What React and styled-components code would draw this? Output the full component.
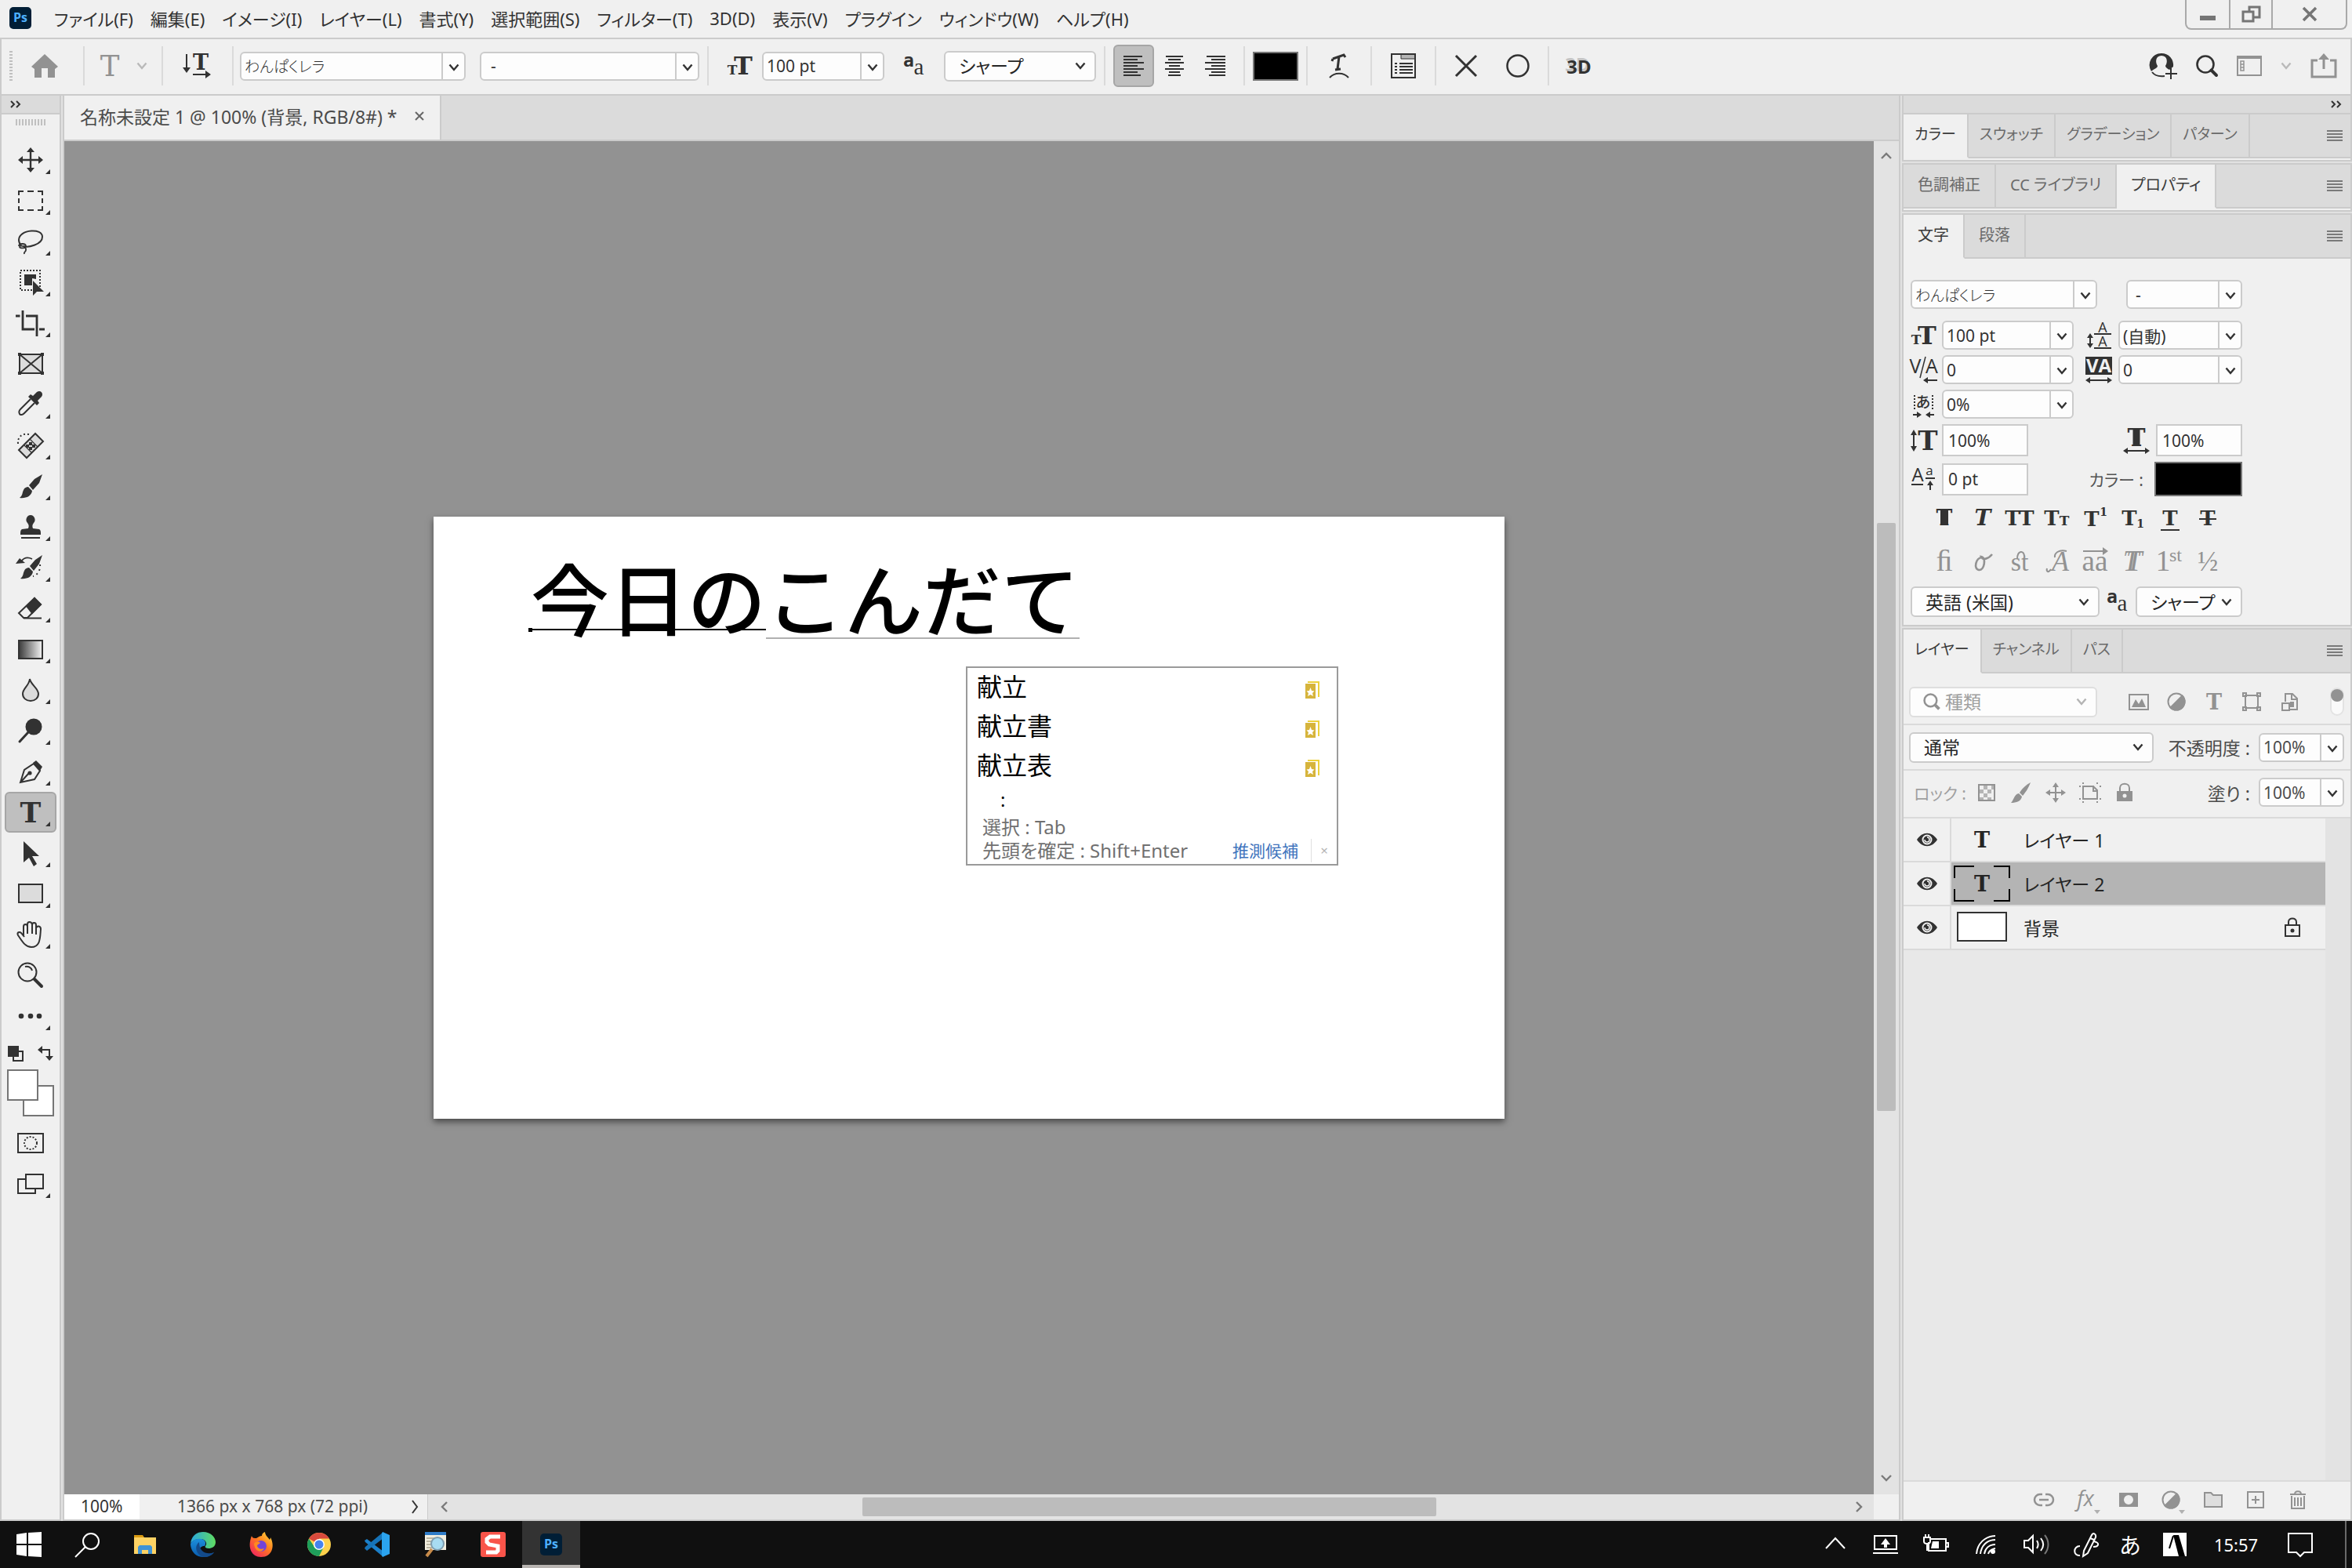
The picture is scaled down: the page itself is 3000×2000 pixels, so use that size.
import React, { useState } from 'react';
import styled, { createGlobalStyle, css } from 'styled-components';

const INK = '#323232';
const MUTED = '#929292';
const LINE = '#cbcbcb';
const SERIF = '"DejaVu Serif", serif';

const GlobalStyle = createGlobalStyle`
  *, *::before, *::after { box-sizing: border-box; }
  body {
    margin: 0;
    background: #e1e1e1;
    color: #323232;
    font-family: "Noto Sans", "Noto Sans CJK JP", sans-serif;
    font-size: 23px;
    font-feature-settings: "palt";
  }
  button, input, select {
    font: inherit;
    font-feature-settings: inherit;
    color: inherit;
    margin: 0;
    padding: 0;
    border: 0;
    background: none;
    outline: none;
  }
  svg { display: block; flex: none; overflow: visible; }
`;

/* ---------- icons ---------- */

const Icon = ({ w = 40, h = w, color = INK, sw = 2, children }) => (
  <svg
    width={w}
    height={h}
    viewBox={`0 0 ${w} ${h}`}
    fill="none"
    stroke={color}
    strokeWidth={sw}
    color={color}
    aria-hidden="true"
  >
    {children}
  </svg>
);

const Letter = ({ x, y, size, weight = 700, family = SERIF, italic, children, fill = 'currentColor' }) => (
  <text
    x={x}
    y={y}
    fontSize={size}
    fontWeight={weight}
    fontFamily={family}
    fontStyle={italic ? 'italic' : 'normal'}
    textAnchor="middle"
    fill={fill}
    stroke="none"
  >
    {children}
  </text>
);

const Chevron = ({ color = INK }) => (
  <Icon w={14} h={10} color={color} sw={2.4}>
    <path d="M1.5 1.5 7 8 12.5 1.5" />
  </Icon>
);

const Menu4 = () => (
  <Icon w={20} h={14} color="#7a7a7a">
    <path d="M0 1H20M0 5H20M0 9H20M0 13H20" />
  </Icon>
);

const DoubleChevron = () => (
  <Icon w={14} h={10}>
    <path d="M1 1 5 5 1 9M8 1 12 5 8 9" />
  </Icon>
);

const Search = ({ color = INK, size = 28 }) => (
  <svg width={size} height={size} viewBox="0 0 28 28" fill="none" stroke={color} strokeWidth="2.6" aria-hidden="true">
    <circle cx="12" cy="12" r="10.5" />
    <path d="M19.5 19.5 26 26" strokeWidth="4" strokeLinecap="round" />
  </svg>
);

const tools = [
  {
    name: '移動ツール',
    art: (
      <>
        <path d="M20 6V34M6 20H34" strokeWidth="2.4" />
        <path d="M20 4l5 6H15zM20 36l5-6H15zM4 20l6-5v10zM36 20l-6-5v10z" fill="currentColor" stroke="none" />
      </>
    )
  },
  {
    name: '長方形選択ツール',
    art: <path d="M5 13V8H11M16 8H24M29 8H35V13M35 17V23M35 27V32H29M24 32H16M11 32H5V27M5 23V17" />
  },
  {
    name: 'なげなわツール',
    art: (
      <>
        <path d="M11 26C17 28 35 24 35 14 35 8 28 6 21 6.5 12 7 5 12 5 18c0 3 1 5 3 7" />
        <path d="M5 26c0-4 9-4 9 0 0 3-8 3-8 1 0-3 9-1 8 4-.5 3-3 2-2 5" strokeWidth="1.8" />
      </>
    )
  },
  {
    name: 'オブジェクト選択ツール',
    art: (
      <>
        <rect x="7" y="5" width="25" height="25" strokeDasharray="2 2" />
        <path d="M12 10H27V16L22 15V24H12z" fill="currentColor" stroke="none" />
        <path d="M23 18V37L28 32H37z" fill="currentColor" stroke="none" />
      </>
    )
  },
  {
    name: '切り抜きツール',
    art: <path d="M1 11H6.5M10 4V28H25M31 28H38M14 11H28V37" strokeWidth="2.8" />
  },
  {
    name: 'フレームツール',
    plain: true,
    art: (
      <>
        <rect x="6" y="8" width="29" height="24" fill="#dcdcdc" />
        <path d="M6 8 35 32M35 8 6 32" />
        <path d="M4 6h4v4H4zM33 6h4v4h-4zM4 30h4v4H4zM33 30h4v4h-4z" fill="currentColor" stroke="none" />
      </>
    )
  },
  {
    name: 'スポイトツール',
    art: (
      <>
        <path d="M20 13 7 26c-2 2-2 4-1 6s4 1 6-1L25 18" />
        <path d="M17 10l3-3 3 2 5-5c5-3 9 2 6 6l-5 5 2 3-3 3z" fill="currentColor" stroke="none" />
      </>
    )
  },
  {
    name: 'スポット修復ブラシツール',
    art: (
      <>
        <path d="M4 18C3 9 10 4 18 6" strokeDasharray="2 3" />
        <path d="M5 26 26 5 36 15 15 36z" fill="#dcdcdc" />
        <path d="M12 20 21 29M19 12 29 22" strokeWidth="1.2" />
        <path d="M19 17h2v2h-2zM19 23h2v2h-2zM15 20h2v2h-2zM23 20h2v2h-2z" fill="currentColor" />
      </>
    )
  },
  {
    name: 'ブラシツール',
    art: (
      <path d="M35 5 31 16 23 25 18 19 25 11zM17 21l5 5c-1 7-8 10-16 9 4-3 3-6 5-10 1-3 4-4 6-4z" fill="currentColor" stroke="none" />
    )
  },
  {
    name: 'コピースタンプツール',
    art: (
      <>
        <path d="M20 5a6 6 0 0 1 4 10c-2 2-2 5-1 7l8 1c2 1 2 3 2 7H7c0-4 0-6 2-7l8-1c1-2 1-5-1-7A6 6 0 0 1 20 5z" fill="currentColor" stroke="none" />
        <path d="M8 34H32" />
      </>
    )
  },
  {
    name: 'ヒストリーブラシツール',
    art: (
      <>
        <path d="M35 4 31 15 24 24 19 18 26 10zM18 20l5 5c-1 7-8 10-16 9 4-3 3-6 5-10 1-3 4-4 6-4z" fill="currentColor" stroke="none" />
        <path d="M22 9C16 6 11 8 8 12" strokeWidth="1.6" />
        <path d="M1 15 6 8l7 6z" fill="currentColor" stroke="none" />
        <path d="M32 16C33 24 28 30 23 31" strokeDasharray="2 4" />
      </>
    )
  },
  {
    name: '消しゴムツール',
    art: (
      <>
        <path d="M5 26 25 7 33 15 16 32H11z" />
        <path d="M15 17 25 7 33 15 22 26z" fill="currentColor" />
        <path d="M11 32.5H34" />
      </>
    )
  },
  {
    name: 'グラデーションツール',
    art: (
      <>
        <defs>
          <linearGradient id="toolFade">
            <stop offset="0" stopColor="#3a3a3a" />
            <stop offset="1" stopColor="#f4f4f4" />
          </linearGradient>
        </defs>
        <rect x="5" y="9" width="30" height="23" fill="url(#toolFade)" />
      </>
    )
  },
  {
    name: 'ぼかしツール',
    art: <path d="M19 6c1 7 11 12 11 19 0 5-4 9-10 9s-10-4-10-9c0-7 8-10 9-19z" fill="#dcdcdc" />
  },
  {
    name: '覆い焼きツール',
    art: (
      <>
        <circle cx="24" cy="15" r="10.5" fill="currentColor" stroke="none" />
        <path d="M17 22 6 34" strokeWidth="3" strokeLinecap="round" />
      </>
    )
  },
  {
    name: 'ペンツール',
    art: (
      <>
        <path d="M7 34 12 18 24 10 32 19 25 30zM7 34 18 22" />
        <circle cx="19" cy="22" r="2.6" fill="currentColor" stroke="none" />
        <path d="M23 9 27 6 35 14 32 19z" fill="currentColor" stroke="none" />
      </>
    )
  },
  { name: '横書き文字ツール', active: true, art: <Letter x={20} y={33} size={36} weight={700}>T</Letter> },
  {
    name: 'パスコンポーネント選択ツール',
    art: <path d="M11 5V32L18 26 24 37 28 34 22 24H31z" fill="currentColor" stroke="none" />
  },
  { name: '長方形ツール', art: <rect x="5" y="8" width="30" height="23" fill="#dcdcdc" /> },
  {
    name: '手のひらツール',
    art: (
      <path d="M11 22V10c0-4 5-4 5 0v9V7c0-4 5-4 6 0v12V8c0-4 5-4 5 0v12-8c1-4 6-3 6 1-1 10 0 23-12 23C13 36 9 28 4 21c-2-4 2-5 4-3l4 5" />
    )
  },
  {
    name: 'ズームツール',
    plain: true,
    art: (
      <>
        <circle cx="16" cy="16" r="11.5" />
        <path d="M13 9c4-1 8 1 9 5" />
        <path d="M25 25 34 34" strokeWidth="4" strokeLinecap="round" />
      </>
    )
  },
  {
    name: 'ツールバーを編集',
    art: (
      <g fill="currentColor" stroke="none">
        <circle cx="8" cy="20" r="3.3" />
        <circle cx="20" cy="20" r="3.3" />
        <circle cx="31" cy="20" r="3.3" />
      </g>
    )
  }
];

/* ---------- shared controls ---------- */

const IconButton = styled.button`
  flex: none;
  width: ${p => p.$w || 48}px;
  height: ${p => p.$h || 52}px;
  display: flex;
  align-items: center;
  justify-content: center;
  border: 2px solid transparent;
  border-radius: 6px;
  ${p =>
    p.$active &&
    css`
      background: #bfbfbf;
      border-color: #a6a6a6;
    `}
`;

const ComboBox = styled.div`
  display: flex;
  flex: none;
  width: ${p => p.$w}px;
  height: 37px;
  background: #fdfdfd;
  border: 2px solid ${LINE};
  border-radius: 6px;
  font-size: 21px;
  input {
    flex: 1;
    min-width: 0;
    padding-left: ${p => p.$pad || 4}px;
  }
  button {
    width: 29px;
    border-left: 2px solid ${LINE};
    display: flex;
    align-items: center;
    justify-content: center;
    padding-top: 3px;
  }
`;

const FontInput = styled.input`
  font-size: 19px;
  font-weight: 300;
`;

const Combo = ({ w, pad, label, value, thin }) => {
  const Field = thin ? FontInput : 'input';
  return (
    <ComboBox $w={w} $pad={pad}>
      <Field aria-label={label} defaultValue={value} />
      <button type="button" aria-label={`${label} 一覧`}>
        <Chevron />
      </button>
    </ComboBox>
  );
};

const SelectBox = styled.div`
  flex: none;
  display: grid;
  align-items: center;
  width: ${p => p.$w}px;
  height: 39px;
  background: #fdfdfd;
  border: 2px solid ${p => (p.$dim ? '#dedede' : LINE)};
  border-radius: 6px;
  color: ${p => (p.$dim ? '#a0a0a0' : '#252525')};
  select, svg { grid-area: 1 / 1; }
  select {
    appearance: none;
    width: 100%;
    height: 35px;
    padding-left: ${p => (p.$dim ? 44 : 17)}px;
  }
  svg {
    justify-self: end;
    margin-right: 11px;
    pointer-events: none;
  }
  svg.lead {
    justify-self: start;
    margin-left: 16px;
  }
`;

const Select = ({ w, label, value, dim }) => (
  <SelectBox $w={w} $dim={dim}>
    <select aria-label={label} defaultValue={value}>
      <option>{value}</option>
    </select>
    {dim && (
      <svg className="lead" width="22" height="22" viewBox="0 0 28 28" fill="none" stroke="#929292" strokeWidth="3.2">
        <circle cx="12" cy="12" r="10" />
        <path d="M19 19 26 26" strokeWidth="5" />
      </svg>
    )}
    <Chevron color={dim ? '#b4b4b4' : INK} />
  </SelectBox>
);

const Swatch = styled.button`
  flex: none;
  width: ${p => p.$w}px;
  height: ${p => p.$h}px;
  background: ${p => p.$fill || '#000'};
  border: 2px solid #757575;
`;

/* ---------- top bars ---------- */

const Page = styled.div`
  min-height: 100vh;
  display: flex;
  flex-direction: column;
`;

const MenuBar = styled.header`
  display: flex;
  height: 50px;
  background: #f0f0f0;
  border-bottom: 2px solid ${LINE};
`;

const MenuItems = styled.nav`
  flex: 1;
  display: flex;
  align-items: center;
  gap: 22px;
  padding: 0 0 2px 12px;
  font-size: 22px;
  white-space: nowrap;
`;

const PsBadge = styled.span`
  width: 28px;
  height: 28px;
  border-radius: 5px;
  background: #001e36;
  color: #4db0ff;
  font: 700 16px/27px "Open Sans", sans-serif;
  text-align: center;
  margin-right: 7px;
`;

const WindowButtons = styled.div`
  display: flex;
  height: 38px;
  margin-right: 6px;
  border: 2px solid #a9a9a9;
  border-top: 0;
  border-radius: 0 0 8px 8px;
  button {
    width: 54px;
    display: flex;
    align-items: center;
    justify-content: center;
  }
  button + button { border-left: 2px solid #a9a9a9; }
  button:last-child { width: 95px; }
`;

const OptionsBar = styled.div`
  display: flex;
  align-items: center;
  height: 72px;
  padding: 0 17px 2px 10px;
  background: #f0f0f0;
  border: solid ${LINE};
  border-width: 0 2px 2px;
`;

const Sep = styled.span`
  flex: none;
  width: 2px;
  height: 50px;
  margin: 0 ${p => p.$m || 10}px;
  background: #dadada;
`;

const Grip = styled.span`
  width: 4px;
  height: 39px;
  background: repeating-linear-gradient(#c0c0c0 0 2px, transparent 2px 4px);
`;

const Group = styled.div`
  display: flex;
  align-items: center;
  gap: ${p => p.$gap || 0}px;
`;

const Push = styled.div`
  margin-left: auto;
  display: flex;
  align-items: center;
  gap: 24px;
  button { width: auto; border: 0; }
`;

const ThreeD = styled.button`
  width: 56px;
  font: 700 24px "Open Sans", sans-serif;
  text-shadow: -2px -3px 0 #c4c4c4;
`;

const menuItems = [
  'ファイル(F)', '編集(E)', 'イメージ(I)', 'レイヤー(L)', '書式(Y)', '選択範囲(S)',
  'フィルター(T)', '3D(D)', '表示(V)', 'プラグイン', 'ウィンドウ(W)', 'ヘルプ(H)'
];

const alignments = [
  { name: '左揃え', d: 'M0 1H24M0 5H18M0 9H26M0 13H18M0 17H26M0 21H18M0 25H22' },
  { name: '中央揃え', d: 'M2 1H24M5 5H21M1 9H25M6 13H20M1 17H25M6 21H20M5 25H21' },
  { name: '右揃え', d: 'M2 1H26M8 5H26M0 9H26M8 13H26M0 17H26M8 21H26M5 25H26' }
];

const SizeIcon = () => (
  <Icon w={32} h={30}>
    <Letter x={21} y={26} size={32}>T</Letter>
    <Letter x={7} y={26} size={17}>T</Letter>
  </Icon>
);

const AntiAlias = () => (
  <Icon w={28} h={30}>
    <Letter x={7} y={16} size={23} family='"DejaVu Sans Mono", monospace'>a</Letter>
    <Letter x={20} y={26} size={29} weight={400} family='"Liberation Serif", serif'>a</Letter>
  </Icon>
);

const Options = () => {
  const [align, setAlign] = useState(0);
  return (
    <OptionsBar>
      <Grip />
      <IconButton $w={82} aria-label="ホーム">
        <Icon w={34} h={30} color={MUTED}>
          <path d="M17 0 34 16 30 19V30H21V18H13V30H4V19L0 16z" fill="currentColor" stroke="none" />
        </Icon>
      </IconButton>
      <Sep $m={8} />
      <IconButton $w={82} aria-label="文字ツール">
        <Group $gap={20}>
          <Icon w={28} h={30} color={MUTED}>
            <Letter x={14} y={28} size={37} weight={400}>T</Letter>
          </Icon>
          <Chevron color="#b9b9b9" />
        </Group>
      </IconButton>
      <Sep $m={8} />
      <IconButton $w={72} aria-label="テキストの方向">
        <Icon w={36} h={32}>
          <Letter x={22} y={21} size={27}>T</Letter>
          <path d="M4 1V20M12 27H30" />
          <path d="M-1 18H9L4 25zM28 22V32L35 27z" fill="currentColor" stroke="none" />
        </Icon>
      </IconButton>
      <Sep $m={8} />
      <Group $gap={18}>
        <Combo w={288} label="フォント" value="わんぱくレラ" thin />
        <Combo w={280} pad={12} label="スタイル" value="-" />
      </Group>
      <Sep />
      <IconButton $w={58} aria-label="サイズ"><SizeIcon /></IconButton>
      <Combo w={156} label="フォントサイズ" value="100 pt" />
      <IconButton $w={76} aria-label="アンチエイリアス"><AntiAlias /></IconButton>
      <Select w={194} label="アンチエイリアスの種類" value="シャープ" />
      <Sep />
      {alignments.map((a, i) => (
        <IconButton key={a.name} $w={52} $h={54} $active={i === align} aria-label={a.name} onClick={() => setAlign(i)}>
          <Icon w={26} h={26}><path d={a.d} /></Icon>
        </IconButton>
      ))}
      <Sep />
      <Swatch $w={58} $h={37} aria-label="テキストカラー" />
      <Sep />
      <IconButton $w={60} aria-label="ワープテキスト">
        <Icon w={28} h={32}>
          <path d="M6 7 5 10M6 7 20 2 22 5M14 4 12 20M9 21 16 20" strokeWidth="3" />
          <path d="M2 31C8 24 20 24 26 31" />
        </Icon>
      </IconButton>
      <Sep />
      <IconButton $w={60} aria-label="パネルの切り替え">
        <Icon w={32} h={32}>
          <path d="M13 1V7H31V1z" fill="#b5b5b5" strokeWidth="1" />
          <path d="M1 1H31V31H1zM5 13H8M11 13H28M5 17H8M11 17H28M5 21H8M11 21H28M5 25H8M11 25H28" />
        </Icon>
      </IconButton>
      <Sep />
      <Group $gap={10}>
        <IconButton $w={56} aria-label="キャンセル">
          <Icon w={28} h={28} sw={3}><path d="M1 1 27 27M27 1 1 27" /></Icon>
        </IconButton>
        <IconButton $w={56} aria-label="確定">
          <Icon w={30} sw={2.5}><circle cx="15" cy="15" r="13.5" /></Icon>
        </IconButton>
      </Group>
      <Sep />
      <ThreeD>3D</ThreeD>
      <Push>
        <IconButton aria-label="アカウント">
          <Icon w={36} h={34}>
            <path fillRule="evenodd" d="M16 1a15 15 0 0 1 15 17l-5 4c-3-2-5-3-5-5 3-4 3-13-5-13s-8 9-5 13c0 3-5 4-8 7A15 15 0 0 1 16 1z" fill="currentColor" stroke="none" />
            <path d="M4 25C8 30 13 31 20 30M28 20V34M21 27H36" />
          </Icon>
        </IconButton>
        <IconButton aria-label="検索"><Search /></IconButton>
        <IconButton aria-label="ワークスペース">
          <Icon w={32} h={26} color={MUTED}>
            <path d="M1 1H31V25H1zM1 3H31" />
            <path d="M5 7H9V19H5zM5 11H9M5 15H9" strokeWidth="1.5" />
          </Icon>
        </IconButton>
        <Chevron color="#b9b9b9" />
        <IconButton aria-label="共有">
          <Icon w={34} h={32} color={MUTED}>
            <path d="M9 9H2V30H32V9H25M17 20V5" strokeWidth="3" />
            <path d="M17 0 24 8H10z" fill="currentColor" stroke="none" />
          </Icon>
        </IconButton>
      </Push>
    </OptionsBar>
  );
};

/* ---------- left tools ---------- */

const Main = styled.main`
  flex: 1;
  display: flex;
  gap: 2px;
`;

const ToolColumn = styled.aside`
  flex: none;
  width: 78px;
  background: #f0f0f0;
  border: solid ${LINE};
  border-width: 0 2px 2px;
  display: flex;
  flex-direction: column;
  align-items: center;
`;

const CollapseBar = styled.div`
  align-self: stretch;
  display: flex;
  align-items: center;
  justify-content: ${p => (p.$end ? 'flex-end' : 'flex-start')};
  height: 24px;
  padding: 0 11px;
  background: #dbdbdb;
  border-bottom: 2px solid ${LINE};
`;

const ToolGrip = styled.span`
  width: 38px;
  height: 8px;
  margin: 6px 0 18px;
  background: repeating-linear-gradient(90deg, #c0c0c0 0 2px, transparent 2px 4px);
`;

const ToolButton = styled(IconButton)`
  width: 66px;
  position: relative;
  &::after {
    content: '';
    display: ${p => (p.$plain ? 'none' : 'block')};
    position: absolute;
    right: 6px;
    bottom: 6px;
    border: 3px solid transparent;
    border-right-color: ${INK};
    border-bottom-color: ${INK};
  }
`;

const MiniRow = styled.div`
  display: flex;
  justify-content: space-between;
  width: 58px;
  margin: 12px 0 10px;
`;

const ColorPair = styled.div`
  display: grid;
  width: 60px;
  height: 60px;
  margin-bottom: 8px;
  button { grid-area: 1 / 1; }
  button:first-child { place-self: end; }
`;

const Tools = () => (
  <ToolColumn>
    <CollapseBar><DoubleChevron /></CollapseBar>
    <ToolGrip />
    {tools.map(t => (
      <ToolButton key={t.name} $active={t.active} $plain={t.plain} aria-label={t.name}>
        <Icon>{t.art}</Icon>
      </ToolButton>
    ))}
    <MiniRow>
      <Icon w={20} h={20}>
        <path d="M7 7H19V19H7z" />
        <path d="M0 0H14V14H0z" fill="currentColor" stroke="none" />
      </Icon>
      <Icon w={20} h={20}>
        <path d="M4 5H15V16" />
        <path d="M0 5 6 0V10zM10 13H20L15 19z" fill="currentColor" stroke="none" />
      </Icon>
    </MiniRow>
    <ColorPair>
      <Swatch $w={40} $h={40} $fill="#fff" aria-label="背景色" />
      <Swatch $w={40} $h={40} $fill="#fff" aria-label="描画色" />
    </ColorPair>
    <ToolButton $plain aria-label="クイックマスク">
      <Icon>
        <path d="M4 8H36V32H4z" />
        <circle cx="20" cy="20" r="8" strokeDasharray="2 2" />
      </Icon>
    </ToolButton>
    <ToolButton aria-label="スクリーンモード">
      <Icon>
        <path d="M4 14H26V32H4z" />
        <path d="M14 8H36V26H14z" fill="#f0f0f0" />
      </Icon>
    </ToolButton>
  </ToolColumn>
);

/* ---------- document area ---------- */

const Workspace = styled.section`
  flex: 1;
  min-width: 0;
  display: flex;
  flex-direction: column;
  border: solid ${LINE};
  border-width: 0 2px 2px;
`;

const DocTabs = styled.div`
  display: flex;
  height: 58px;
  background: #dbdbdb;
  border-bottom: 2px solid ${LINE};
`;

const DocTab = styled.div`
  display: flex;
  align-items: center;
  gap: 22px;
  padding: 0 20px 4px;
  background: #f0f0f0;
  border-right: 2px solid ${LINE};
  color: #4b4b4b;
`;

const Stage = styled.div`
  flex: 1;
  display: flex;
`;

const Pasteboard = styled.div`
  flex: 1;
  display: flex;
  align-items: center;
  justify-content: center;
  background: #929292;
`;

const Artboard = styled.div`
  position: relative;
  width: 1366px;
  height: 768px;
  padding: 52px 0 0 122px;
  background: #fff;
  box-shadow: 0 4px 8px rgba(0, 0, 0, 0.5);
`;

const Composition = styled.div`
  display: flex;
  color: #000;
  font: 500 100px/100px "Noto Sans CJK JP", sans-serif;
  font-feature-settings: normal;
`;

const Committed = styled.span`
  position: relative;
  height: 93px;
  padding-left: 2px;
  border-bottom: 2px solid #000;
  &::before {
    content: '';
    position: absolute;
    left: -1px;
    bottom: -4px;
    width: 5px;
    height: 5px;
    background: #000;
  }
`;

const Composing = styled.span`
  height: 104px;
  border-bottom: 2px solid #b0b0b0;
`;

const Candidates = styled.div`
  position: absolute;
  left: 679px;
  top: 191px;
  width: 475px;
  height: 254px;
  background: #fff;
  border: 2px solid #9a9a9a;
  color: #000;
`;

const Candidate = styled.div`
  display: flex;
  justify-content: space-between;
  height: 50px;
  padding: 0 22px 0 12px;
  font-size: 32px;
  line-height: 48px;
  svg { margin-top: 17px; }
`;

const More = styled.div`
  height: 38px;
  padding-left: 42px;
  font-size: 24px;
  line-height: 36px;
`;

const Hint = styled.div`
  display: flex;
  align-items: center;
  height: 30px;
  padding-left: 19px;
  color: #707070;
  font-size: 24px;
  line-height: 30px;
  a {
    margin-left: auto;
    padding-right: 16px;
    border-right: 1px solid #e0e0e0;
    font-size: 21px;
    color: #3f74bd;
    text-decoration: none;
  }
  button {
    width: 32px;
    font-size: 17px;
    color: #b5b5b5;
  }
`;

const DictIcon = () => (
  <Icon w={18} h={22}>
    <path d="M3 1H17V20" stroke="#ecd23c" />
    <path d="M0 3H13V22H0z" fill="#d6b43c" stroke="none" />
    <path d="M6.5 8 8 12 11.5 12.5 9 15 10 19 6.5 17 3 19 4 15 1.5 12.5 5 12z" fill="#fff" stroke="none" />
  </Icon>
);

const ScrollTrack = styled.div`
  display: flex;
  flex-direction: ${p => (p.$row ? 'row' : 'column')};
  align-items: center;
  flex: ${p => (p.$row ? '1' : 'none')};
  width: ${p => (p.$row ? 'auto' : '32px')};
  padding: ${p => (p.$row ? '0 12px 0 14px' : '12px 0 14px')};
  background: #e3e3e3;
`;

const Thumb = styled.div`
  border-radius: 2px;
  background: #bcbcbc;
  ${p => (p.$row ? 'height: 24px; flex: 733;' : 'width: 24px; flex: 749;')}
`;

const Space = styled.div`
  flex: ${p => p.$n};
`;

const StatusBar = styled.footer`
  display: flex;
  height: 32px;
  background: #f0f0f0;
  font-size: 21px;
  line-height: 30px;
  input {
    width: 96px;
    padding: 0 0 2px 21px;
    background: #fff;
  }
  svg { align-self: center; }
`;

const DocInfo = styled.button`
  display: flex;
  justify-content: space-between;
  width: 368px;
  padding: 0 9px 0 48px;
  border-right: 1px solid ${LINE};
  color: #4b4b4b;
`;

const Corner = styled.div`
  width: 32px;
`;

const Arrow = ({ d, color = '#7a7a7a' }) => (
  <Icon w={14} h={14} color={color} sw={2.4}><path d={d} /></Icon>
);

const Document = () => (
  <Workspace>
    <DocTabs>
      <DocTab>
        名称未設定 1 @ 100% (背景, RGB/8#) *
        <button type="button" aria-label="閉じる">
          <Icon w={12} h={12} color="#666"><path d="M1 1 11 11M11 1 1 11" /></Icon>
        </button>
      </DocTab>
    </DocTabs>
    <Stage>
      <Pasteboard>
        <Artboard>
          <Composition>
            <Committed>今日の</Committed>
            <Composing>こんだて</Composing>
          </Composition>
          <Candidates>
            {['献立', '献立書', '献立表'].map(word => (
              <Candidate key={word}>{word}<DictIcon /></Candidate>
            ))}
            <More>:</More>
            <Hint>選択 : Tab</Hint>
            <Hint>
              先頭を確定 : Shift+Enter
              <a href="#suggest">推測候補</a>
              <button type="button">×</button>
            </Hint>
          </Candidates>
        </Artboard>
      </Pasteboard>
      <ScrollTrack>
        <Arrow d="M1 10 7 4 13 10" />
        <Space $n={460} />
        <Thumb />
        <Space $n={460} />
        <Arrow d="M1 4 7 10 13 4" />
      </ScrollTrack>
    </Stage>
    <StatusBar>
      <input aria-label="ズーム" defaultValue="100%" />
      <DocInfo>
        1366 px x 768 px (72 ppi)
        <Icon w={12} h={18}><path d="M2 1 8 9 2 17" /></Icon>
      </DocInfo>
      <ScrollTrack $row>
        <Arrow d="M10 1 4 7 10 13" />
        <Space $n={526} />
        <Thumb $row />
        <Space $n={532} />
        <Arrow d="M4 1 10 7 4 13" />
      </ScrollTrack>
      <Corner />
    </StatusBar>
  </Workspace>
);

/* ---------- right panels ---------- */

const PanelColumn = styled.aside`
  flex: none;
  width: 574px;
  display: flex;
  flex-direction: column;
  gap: 2px;
`;

const Panel = styled.section`
  display: flex;
  flex-direction: column;
  border: 2px solid ${LINE};
  background: #f0f0f0;
  ${p => p.$first && 'border-top: 0;'}
  ${p => p.$grow && 'flex: 1;'}
`;

const TabRow = styled.div`
  display: flex;
  height: 56px;
  margin-bottom: ${p => (p.$closed ? 2 : 0)}px;
  background: #dbdbdb;
`;

const Tab = styled.button`
  padding: 0 ${p => (p.$compact ? 14 : 18)}px 6px;
  font-size: ${p => (p.$compact ? 19 : 20)}px;
  white-space: nowrap;
  color: ${p => (p.$active ? '#3a3a3a' : '#6a6a6a')};
  background: ${p => (p.$active ? '#f0f0f0' : 'none')};
  border-right: 2px solid ${LINE};
  border-bottom: 2px solid ${p => (p.$active ? '#f0f0f0' : LINE)};
`;

const TabRest = styled.div`
  flex: 1;
  display: flex;
  align-items: center;
  justify-content: flex-end;
  padding-right: 10px;
  border-bottom: 2px solid ${LINE};
`;

const PanelTabs = ({ tabs, active, closed, compact }) => {
  const [current, setCurrent] = useState(active);
  return (
    <TabRow $closed={closed}>
      {tabs.map(t => (
        <Tab key={t} $active={t === current} $compact={compact} onClick={() => setCurrent(t)}>{t}</Tab>
      ))}
      <TabRest>
        <button type="button" aria-label="パネルメニュー"><Menu4 /></button>
      </TabRest>
    </TabRow>
  );
};

const CharForm = styled.div`
  width: 432px;
  padding: 27px 0 10px 9px;
  display: flex;
  flex-direction: column;
  gap: 7px;
`;

const FormRow = styled.div`
  display: flex;
  align-items: center;
  justify-content: space-between;
  min-height: 37px;
  margin-bottom: ${p => p.$after || 0}px;
`;

const Field = styled.label`
  display: flex;
  align-items: center;
  > svg { margin-right: 8px; }
`;

const PlainInput = styled.input`
  width: 110px;
  height: 41px;
  padding-left: 6px;
  background: #fdfdfd;
  border: 2px solid ${LINE};
  font-size: 21px;
`;

const ColorLabel = styled.label`
  display: flex;
  align-items: center;
  gap: 14px;
  color: #555;
  font-size: 21px;
`;

const StyleRow = styled.div`
  display: flex;
  padding-left: 19px;
  margin-bottom: ${p => p.$after || 0}px;
  button { border: 0; }
`;

const typeStyles = [
  { name: '太字', art: <><Letter x={16} y={24} size={28}>T</Letter><path d="M16 5V23" strokeWidth="10" /></> },
  { name: '斜体', art: <Letter x={17} y={24} size={28} italic>T</Letter> },
  { name: 'オールキャップス', art: <><Letter x={7} y={24} size={26}>T</Letter><Letter x={25} y={24} size={26}>T</Letter></> },
  { name: 'スモールキャップス', art: <><Letter x={9} y={24} size={26}>T</Letter><Letter x={25} y={24} size={17}>T</Letter></> },
  { name: '上付き', art: <><Letter x={12} y={25} size={26}>T</Letter><Letter x={27} y={12} size={14}>1</Letter></> },
  { name: '下付き', art: <><Letter x={12} y={24} size={26}>T</Letter><Letter x={26} y={27} size={14}>1</Letter></> },
  { name: '下線', art: <><Letter x={16} y={24} size={26}>T</Letter><path d="M4 30H28" /></> },
  { name: '取り消し線', art: <><Letter x={16} y={24} size={26}>T</Letter><path d="M5 16H27" /></> }
];

const LIB = '"Liberation Serif", serif';
const openType = [
  { name: '標準合字', art: <Letter x={16} y={30} size={38} weight={400} family={LIB}>ﬁ</Letter> },
  { name: '前後関係に依存する字形', art: <path d="M16 13C8 13 5 28 12 29S22 13 15 12C17 17 24 15 29 9" strokeWidth="2.6" /> },
  { name: '任意の合字', art: <><Letter x={16} y={30} size={34} weight={400} family={LIB}>st</Letter><path d="M13 15C13 4 22 3 22 12" /></> },
  { name: 'スワッシュ字形', art: <><Letter x={20} y={30} size={36} weight={400} family={LIB} italic>A</Letter><path d="M28 5C18 2 12 8 13 13M8 28C4 34 2 30 3 27" /></> },
  { name: 'スタイルのバリエーション', art: <><Letter x={16} y={30} size={37} weight={400} family={LIB}>aa</Letter><path d="M1 5H28" /><path d="M26 0V10L33 5z" fill="currentColor" stroke="none" /></> },
  { name: 'タイトル用字形', art: <><Letter x={14} y={30} size={37} weight={400} family={LIB} italic>T</Letter><Letter x={18} y={30} size={37} weight={400} family={LIB} italic>T</Letter></> },
  { name: '序数表記', art: <><Letter x={7} y={30} size={37} weight={400} family={LIB}>1</Letter><Letter x={23} y={18} size={24} weight={400} family={LIB}>st</Letter></> },
  { name: 'スラッシュを用いた分数', art: <Letter x={16} y={30} size={35} weight={400} family={LIB}>½</Letter> }
];

const LeadingIcon = () => (
  <Icon w={32} h={36}>
    <Letter x={20} y={14} size={18} weight={400} family='"Open Sans", sans-serif'>A</Letter>
    <Letter x={20} y={32} size={18} weight={400} family='"Open Sans", sans-serif'>A</Letter>
    <path d="M9 16H31M9 34H31M4 19V31" />
    <path d="M4 15 8 21H0zM4 34 8 28H0z" fill="currentColor" stroke="none" />
  </Icon>
);

const KerningIcon = () => (
  <Icon w={32} h={36}>
    <Letter x={6} y={22} size={25} weight={400} family='"Open Sans", sans-serif'>V</Letter>
    <Letter x={27} y={22} size={25} weight={400} family='"Open Sans", sans-serif'>A</Letter>
    <path d="M12 28 19 1" strokeWidth="1.5" />
    <path d="M20 31H34" />
    <path d="M16 31 22 27V35z" fill="currentColor" stroke="none" />
  </Icon>
);

const TrackingIcon = () => (
  <Icon w={34} h={36}>
    <path d="M0 1H34V24H0z" fill="currentColor" stroke="none" />
    <Letter x={17} y={21} size={24} family='"Open Sans", sans-serif' fill="#f0f0f0">VA</Letter>
    <path d="M4 31H30" />
    <path d="M0 31 6 27V35zM34 31 28 27V35z" fill="currentColor" stroke="none" />
  </Icon>
);

const TsumeIcon = () => (
  <Icon w={32} h={36}>
    <path d="M5 6V25M28 6V25" strokeDasharray="2 2" />
    <Letter x={16} y={22} size={19} weight={500} family='"Noto Sans CJK JP", sans-serif'>あ</Letter>
    <path d="M3 31H9M24 31H30" />
    <path d="M8 27V35L14 31zM25 27V35L19 31z" fill="currentColor" stroke="none" />
  </Icon>
);

const VScaleIcon = () => (
  <Icon w={32} h={30}>
    <Letter x={22} y={27} size={34}>T</Letter>
    <path d="M4 4V26" />
    <path d="M4 1 8 8H0zM4 29 8 22H0z" fill="currentColor" stroke="none" />
  </Icon>
);

const HScaleIcon = () => (
  <Icon w={34} h={32}>
    <Letter x={17} y={23} size={31}>T</Letter>
    <path d="M17 2V22" strokeWidth="9" />
    <path d="M4 29H30" />
    <path d="M0 29 6 25V33zM34 29 28 25V33z" fill="currentColor" stroke="none" />
  </Icon>
);

const BaselineIcon = () => (
  <Icon w={32} h={32}>
    <Letter x={9} y={19} size={24} weight={400} family='"Open Sans", sans-serif'>A</Letter>
    <Letter x={24} y={11} size={17} weight={400} family='"Open Sans", sans-serif'>a</Letter>
    <path d="M1 23H16M19 15H31M25 30V21" />
    <path d="M25 18 29 24H21z" fill="currentColor" stroke="none" />
  </Icon>
);

const CharacterPanel = () => (
  <CharForm>
    <FormRow $after={8}>
      <Combo w={238} label="フォントファミリー" value="わんぱくレラ" thin />
      <Combo w={148} pad={10} label="フォントスタイル" value="-" />
    </FormRow>
    <FormRow>
      <Field as="div"><SizeIcon /><Combo w={168} label="フォントサイズ" value="100 pt" /></Field>
      <Field as="div"><LeadingIcon /><Combo w={158} label="行送り" value="(自動)" /></Field>
    </FormRow>
    <FormRow>
      <Field as="div"><KerningIcon /><Combo w={168} label="カーニング" value="0" /></Field>
      <Field as="div"><TrackingIcon /><Combo w={158} label="トラッキング" value="0" /></Field>
    </FormRow>
    <FormRow>
      <Field as="div"><TsumeIcon /><Combo w={168} label="文字ツメ" value="0%" /></Field>
    </FormRow>
    <FormRow>
      <Field><VScaleIcon /><PlainInput aria-label="垂直比率" defaultValue="100%" /></Field>
      <Field><HScaleIcon /><PlainInput aria-label="水平比率" defaultValue="100%" /></Field>
    </FormRow>
    <FormRow $after={4}>
      <Field><BaselineIcon /><PlainInput aria-label="ベースラインシフト" defaultValue="0 pt" /></Field>
      <ColorLabel>カラー : <Swatch $w={112} $h={44} /></ColorLabel>
    </FormRow>
    <StyleRow $after={12}>
      {typeStyles.map(s => (
        <IconButton key={s.name} $h={34} aria-label={s.name}>
          <Icon w={32} h={30}>{s.art}</Icon>
        </IconButton>
      ))}
    </StyleRow>
    <StyleRow $after={8}>
      {openType.map(s => (
        <IconButton key={s.name} $h={36} aria-label={s.name}>
          <Icon w={32} h={34} color={MUTED}>{s.art}</Icon>
        </IconButton>
      ))}
    </StyleRow>
    <FormRow>
      <Select w={241} label="言語" value="英語 (米国)" />
      <AntiAlias />
      <Select w={136} label="アンチエイリアス" value="シャープ" />
    </FormRow>
  </CharForm>
);

const LayerBar = styled.div`
  display: flex;
  align-items: center;
  justify-content: space-between;
  height: ${p => p.$h || 58}px;
  padding: ${p => p.$top || 0}px 8px ${p => p.$bottom || 0}px 7px;
  border-bottom: 2px solid #dadada;
  button { border: 0; }
  ${ComboBox} button { border-left: 2px solid ${LINE}; }
`;

const LayerLabel = styled.label`
  display: flex;
  align-items: center;
  gap: 11px;
  color: #4b4b4b;
  white-space: nowrap;
`;

const LockLabel = styled.span`
  width: 77px;
  padding-left: 6px;
  color: #a0a0a0;
  font-size: 21px;
  white-space: nowrap;
`;

const Toggle = styled.label`
  display: block;
  width: 18px;
  height: 36px;
  border: 2px solid #e3e3e3;
  border-radius: 9px;
  background: #fafafa;
  input {
    appearance: none;
    display: block;
    width: 16px;
    height: 16px;
    margin-left: -1px;
    border-radius: 8px;
    background: #929292;
  }
`;

const LayerArea = styled.div`
  flex: 1;
  display: flex;
  background: #e3e3e3;
`;

const LayerList = styled.ul`
  flex: 1;
  margin: 0;
  padding: 0;
  list-style: none;
  background: #e8e8e8;
`;

const LayerRow = styled.li`
  display: flex;
  height: 56px;
  background: #f0f0f0;
  border-bottom: 2px solid #dadada;
  color: #252525;
`;

const EyeCell = styled.button`
  width: 61px;
  display: flex;
  align-items: center;
  justify-content: center;
  border-right: 2px solid #dadada;
`;

const LayerBody = styled.div`
  flex: 1;
  display: flex;
  align-items: center;
  padding-right: 31px;
  background: ${p => (p.$selected ? '#b4b4b4' : 'none')};
  > span { flex: 1; }
`;

const ThumbCell = styled.div`
  width: 92px;
  padding-left: 3px;
`;

const PanelFooter = styled.div`
  display: flex;
  justify-content: flex-end;
  align-items: center;
  gap: 6px;
  height: 50px;
  padding: 0 43px 2px 0;
  border-top: 2px solid #dadada;
  button { border: 0; }
`;

const HalfCircle = () => (
  <>
    <circle cx="14" cy="14" r="10.5" />
    <path d="M21.5 6.5A10.5 10.5 0 0 1 6.5 21.5z" fill="currentColor" />
  </>
);

const filters = [
  { name: 'ピクセルレイヤー', art: <><path d="M2 5H26V24H2z" /><path d="M5 21 10 11 14 17 18 10 23 21z" fill="currentColor" stroke="none" /></> },
  { name: '調整レイヤー', art: <HalfCircle /> },
  { name: 'テキストレイヤー', art: <Letter x={14} y={24} size={27}>T</Letter> },
  { name: 'シェイプレイヤー', art: <path d="M6 6H22V22H6zM3 3H7V7H3zM21 3H25V7H21zM3 21H7V25H3zM21 21H25V25H21z" fill="#f0f0f0" /> },
  { name: 'スマートオブジェクト', art: <><path d="M9 14V4H18L24 10V24H14M17 4V11H24" /><path d="M5 16H14V25H5z" /><path d="M15 14H20V21H15z" fill="currentColor" stroke="none" /></> }
];

const locks = [
  { name: '透明ピクセル', art: <><path d="M4 4H24V24H4z" /><path d="M10 5h5v5h-5zM5 10h5v5H5zM15 10h5v5h-5zM10 15h5v5h-5zM20 5h3v5h-3zM5 20h5v3H5zM15 20h5v3h-5z" fill="#b5b5b5" stroke="none" /></> },
  { name: '画像ピクセル', art: <path d="M26 1C23 9 20 13 16 18L12 14C16 8 20 4 26 1zM11 15 15 19C14 25 8 27 1 27 5 23 5 16 11 15z" fill="currentColor" stroke="none" /> },
  { name: '位置', art: <><path d="M14 4V24M4 14H24" /><path d="M14 1l4 6h-8zM14 27l4-6h-8zM1 14l6-4v8zM27 14l-6-4v8z" fill="currentColor" stroke="none" /></> },
  { name: 'アートボード', art: <><path d="M5 6H18L23 11V22H5z" /><path d="M18 5V12H24M0 6H2M26 6H28M5 1V3M23 1V3M0 22H2M26 22H28M5 25V27M23 25V27" /></> },
  { name: 'すべて', art: <><path d="M4 12H24V25H4z" fill="currentColor" stroke="none" /><path d="M8 13V8C8 1 20 1 20 8V13" /><circle cx="14" cy="18" r="2.5" fill="#f0f0f0" stroke="none" /></> }
];

const footerIcons = [
  { name: 'リンク', art: <path d="M12 7H9a7 7 0 0 0 0 14h3M16 7h3a7 7 0 0 1 0 14h-3M8 14H20" strokeWidth="2.5" /> },
  { name: 'レイヤースタイル', art: <><Letter x={13} y={22} size={27} weight={400} family='"Open Sans", sans-serif' italic>fx</Letter><path d="M24 27H32L28 32z" fill="#b0b0b0" stroke="none" /></> },
  { name: 'マスク', art: <path fillRule="evenodd" d="M2 5H26V23H2zM14 8a6 6 0 1 0 0 12 6 6 0 1 0 0-12z" fill="currentColor" stroke="none" /> },
  { name: '調整', art: <><HalfCircle /><path d="M24 27H32L28 32z" fill="#b0b0b0" stroke="none" /></> },
  { name: 'グループ', art: <path d="M3 5H11L14 8H25V23H3z" fill="#dedede" /> },
  { name: '新規レイヤー', art: <path d="M4 4H24V24H4zM14 9V19M9 14H19" /> },
  { name: '削除', art: <path d="M4 7H24M10 7C10 2 18 2 18 7M6 9V25H22V9M10 11V22M14 11V22M18 11V22" /> }
];

const Eye = () => (
  <Icon w={26} h={18}>
    <path d="M0 9C7-2 19-2 26 9 19 20 7 20 0 9z" fill="currentColor" stroke="none" />
    <circle cx="13" cy="9" r="5.5" stroke="#f0f0f0" />
    <path d="M13 6a3 3 0 1 1-3 3" stroke="#f0f0f0" strokeWidth="1.5" />
  </Icon>
);

const layers = [
  { name: 'レイヤー 1', type: 'text' },
  { name: 'レイヤー 2', type: 'text', selected: true },
  { name: '背景', type: 'background' }
];

const LayerThumb = ({ layer }) => (
  <Icon w={72} h={46} color="#000">
    {layer.selected && <path d="M1 16V1H26M51 1H71V16M1 30V45H26M51 45H71V30" />}
    {layer.type === 'text' ? (
      <Letter x={36} y={33} size={27} fill="#252525">T</Letter>
    ) : (
      <rect x="5" y="4" width="62" height="36" fill="#fff" stroke={INK} />
    )}
  </Icon>
);

const LayersPanel = () => (
  <>
    <LayerBar $h={66} $top={8}>
      <Select w={240} dim label="フィルターの種類" value="種類" />
      <Group>
        {filters.map(f => (
          <IconButton key={f.name} $h={40} aria-label={f.name}>
            <Icon w={28} color={MUTED}>{f.art}</Icon>
          </IconButton>
        ))}
      </Group>
      <Toggle><input type="checkbox" aria-label="フィルターのオンオフ" /></Toggle>
    </LayerBar>
    <LayerBar>
      <Select w={312} label="描画モード" value="通常" />
      <LayerLabel>不透明度 : <Combo w={109} label="不透明度" value="100%" /></LayerLabel>
    </LayerBar>
    <LayerBar $h={61} $bottom={4}>
      <Group>
        <LockLabel>ロック :</LockLabel>
        {locks.map(l => (
          <IconButton key={l.name} $w={44} $h={40} aria-label={l.name}>
            <Icon w={28} color={MUTED}>{l.art}</Icon>
          </IconButton>
        ))}
      </Group>
      <LayerLabel>塗り : <Combo w={109} label="塗り" value="100%" /></LayerLabel>
    </LayerBar>
    <LayerArea>
      <LayerList>
        {layers.map(l => (
          <LayerRow key={l.name}>
            <EyeCell aria-label={`${l.name} の表示`}><Eye /></EyeCell>
            <LayerBody $selected={l.selected}>
              <ThumbCell><LayerThumb layer={l} /></ThumbCell>
              <span>{l.name}</span>
              {l.type === 'background' && (
                <Icon w={22} h={26}>
                  <path d="M2 10H20V24H2zM6 10V6C6 0 16 0 16 6V10" />
                  <circle cx="11" cy="17" r="2.5" fill="currentColor" stroke="none" />
                </Icon>
              )}
            </LayerBody>
          </LayerRow>
        ))}
      </LayerList>
      <Corner />
    </LayerArea>
    <PanelFooter>
      {footerIcons.map(f => (
        <IconButton key={f.name} $h={40} aria-label={f.name}>
          <Icon w={28} color={MUTED}>{f.art}</Icon>
        </IconButton>
      ))}
    </PanelFooter>
  </>
);

const Panels = () => (
  <PanelColumn>
    <Panel $first>
      <CollapseBar $end><DoubleChevron /></CollapseBar>
      <PanelTabs tabs={['カラー', 'スウォッチ', 'グラデーション', 'パターン']} active="カラー" closed compact />
    </Panel>
    <Panel>
      <PanelTabs tabs={['色調補正', 'CC ライブラリ', 'プロパティ']} active="プロパティ" closed />
    </Panel>
    <Panel>
      <PanelTabs tabs={['文字', '段落']} active="文字" />
      <CharacterPanel />
    </Panel>
    <Panel $grow>
      <PanelTabs tabs={['レイヤー', 'チャンネル', 'パス']} active="レイヤー" compact />
      <LayersPanel />
    </Panel>
  </PanelColumn>
);

/* ---------- taskbar ---------- */

const Taskbar = styled.footer`
  display: flex;
  align-items: center;
  height: 60px;
  background: #101010;
  color: #fff;
`;

const TaskButton = styled.button`
  width: 74px;
  height: 60px;
  display: flex;
  align-items: center;
  justify-content: center;
  ${p =>
    p.$active &&
    css`
      background: #333;
      border-bottom: 4px solid #b8b4b1;
      padding-top: 4px;
    `}
  ${PsBadge} { margin: 0; }
`;

const Tray = styled.div`
  margin-left: auto;
  display: flex;
  align-items: center;
  height: 60px;
`;

const TrayButton = styled.button`
  width: ${p => p.$w || 64}px;
  height: 60px;
  display: flex;
  align-items: center;
  justify-content: center;
  font-size: ${p => p.$size || 22}px;
`;

const ShowDesktop = styled.button`
  width: 9px;
  height: 60px;
  border-left: 2px solid #6a6a6a;
`;

const apps = [
  {
    name: 'スタート',
    art: <path d="M0 3 13 1V15H0zM15 1 32 0V15H15zM0 17H13V31L0 29zM15 17H32V32L15 31z" fill="#fff" stroke="none" />
  },
  {
    name: '検索',
    art: <><circle cx="21" cy="12" r="10" stroke="#fff" /><path d="M14 19 1 32" stroke="#fff" /></>
  },
  {
    name: 'エクスプローラー',
    art: (
      <g stroke="none">
        <path d="M2 4H13L15 7H14V12H2z" fill="#d99a12" />
        <path d="M2 7H30V28H2z" fill="#fdd264" />
        <path d="M7 28V19L9 17H23L25 19V28H20V23H12V28z" fill="#3f93d6" />
      </g>
    )
  },
  {
    name: 'Edge',
    art: (
      <g stroke="none">
        <defs>
          <linearGradient id="edgeTop"><stop offset="0" stopColor="#2aa7e0" /><stop offset="1" stopColor="#5fdc60" /></linearGradient>
          <linearGradient id="edgeLow" x2="0" y2="1"><stop offset="0" stopColor="#1c8fdc" /><stop offset="1" stopColor="#0a5cad" /></linearGradient>
        </defs>
        <path d="M0 15C1 5 8 0 16 0c10 0 16 7 16 13 0 6-5 8-9 8-4 0-5-2-4-3 3-3 0-9-6-9C7 9 2 11 0 15z" fill="url(#edgeTop)" />
        <path d="M0 15C3 10 8 8 13 9c5 0 8 5 5 9-1 0-7 0-7 7 3 6 12 6 19 1C26 31 21 32 16 32 6 32 0 24 0 15z" fill="url(#edgeLow)" />
        <path d="M11 13C4 18 7 30 17 32 22 32 27 30 30 26 22 29 11 27 11 13z" fill="#134a8a" />
      </g>
    )
  },
  {
    name: 'Firefox',
    art: (
      <g stroke="none">
        <defs>
          <linearGradient id="foxFire" x1="1" y1="0" x2="0.2" y2="1"><stop offset="0" stopColor="#ffe23d" /><stop offset="0.5" stopColor="#ff7a1f" /><stop offset="1" stopColor="#f0245f" /></linearGradient>
        </defs>
        <path d="M4 5C5 8 7 8 10 8 13 6 15 5 17 5 17 2 19 1 21 0 21 4 25 7 27 10 28 8 28 7 28 7 34 18 30 32 16 32 4 32-2 20 4 5z" fill="url(#foxFire)" />
        <circle cx="16" cy="18" r="7" fill="#7443d8" />
        <path d="M7 15C9 12 13 12 15 14L11 17C11 21 16 23 20 21 17 27 8 26 7 15z" fill="#ff8a1f" />
      </g>
    )
  },
  {
    name: 'Chrome',
    art: (
      <g stroke="none">
        <circle cx="16" cy="16" r="15" fill="#fdd14b" />
        <path d="M16 16 3 8.5A15 15 0 0 1 29 8.5H16z" fill="#d94a3d" />
        <path d="M3 8.5A15 15 0 0 0 16 31L22 19 10 19z" fill="#1e9e5a" />
        <circle cx="16" cy="16" r="7" fill="#fff" />
        <circle cx="16" cy="16" r="5.5" fill="#4583ee" />
      </g>
    )
  },
  {
    name: 'Visual Studio Code',
    art: (
      <g stroke="none">
        <path d="M0 11 3 9 24 25V32L1 13z" fill="#1b7fc9" />
        <path d="M0 21 3 24 24 8V0L1 19z" fill="#1673b8" />
        <path d="M23 0 32 4V28L23 32 22 30V2z" fill="#2ba3ee" />
      </g>
    )
  },
  {
    name: 'ビューアー',
    art: (
      <>
        <path d="M3 0H30V23H3z" fill="#f3efe0" stroke="none" />
        <path d="M3 0H30V4H3z" fill="#2f7cc8" stroke="none" />
        <path d="M5 8H18M5 12H14M5 16H13M5 20H14" stroke="#a9a48f" strokeWidth="1.5" />
        <path d="M12 22 5 31" stroke="#c88b4a" strokeWidth="4" />
        <circle cx="19" cy="15" r="8" fill="#a8dcf2" stroke="#7f9eb0" />
      </>
    )
  },
  {
    name: 'Snagit',
    art: (
      <>
        <rect width="32" height="32" rx="3" fill="#f9544a" stroke="none" />
        <path d="M25 6H12L8 9V13L11 16 22 18V24L20 26H7" stroke="#fff" strokeWidth="5" />
      </>
    )
  }
];

const tray = [
  { name: '隠れているインジケーター', w: 28, art: <path d="M2 20 14 7 26 20" /> },
  { name: '更新', w: 32, art: <><path d="M2 4H30V21H2zM0 26H32" /><path d="M16 7 22 15H18V19H14V15H10z" fill="#fff" stroke="none" /></> },
  { name: 'バッテリー', w: 32, art: <><path d="M10 8H29V23H7V12M29 13H32V18H29" /><path d="M12 11H20V20H10z" fill="#fff" stroke="none" /><path d="M1 6H9V11C9 15 1 15 1 11zM3 2V6M7 2V6M5 14V23" /></> },
  { name: 'ネットワーク', w: 28, art: <><path d="M2 27C3 14 13 4 26 4M7 27C8 17 15 9 26 9M12 27C13 20 18 15 26 15M17 27C18 23 21 21 26 20" /><circle cx="23" cy="24" r="3" fill="#fff" stroke="none" /></> },
  { name: '音量', w: 32, art: <><path d="M1 10H6L12 4V25L6 19H1zM17 10C19 13 19 17 17 20M22 7C26 12 26 18 22 23" /><path d="M27 3C33 10 33 20 27 27" stroke="#777" /></> },
  { name: 'ペン', w: 32, art: <><path d="M13 23 23 3C25-1 29 2 28 6L18 26 12 30zM21 7 26 9" /><path d="M8 17C-1 17-1 30 8 29M26 11C34 13 32 18 25 18" /></> }
];

const TaskbarRow = () => (
  <Taskbar>
    {apps.map(a => (
      <TaskButton key={a.name} aria-label={a.name}>
        <Icon w={32}>{a.art}</Icon>
      </TaskButton>
    ))}
    <TaskButton $active aria-label="Photoshop"><PsBadge>Ps</PsBadge></TaskButton>
    <Tray>
      {tray.map(t => (
        <TrayButton key={t.name} aria-label={t.name}>
          <Icon w={t.w} h={30} color="#fff">{t.art}</Icon>
        </TrayButton>
      ))}
      <TrayButton $w={48} $size={28}>あ</TrayButton>
      <TrayButton $w={66} aria-label="ATOK">
        <Icon w={30} h={30}>
          <path d="M0 0H30V30H0z" fill="#fff" stroke="none" />
          <path d="M13 3H20L28 30H20z" fill="#000" stroke="none" />
          <path d="M13 4 8 20" stroke="#000" />
        </Icon>
      </TrayButton>
      <TrayButton $w={90}>15:57</TrayButton>
      <TrayButton $w={74} aria-label="通知">
        <Icon w={32} h={32} color="#fff">
          <path d="M1 2H31V26H21L16 31 11 26H1z" />
        </Icon>
      </TrayButton>
      <TrayButton $w={20} aria-label="余白" />
      <ShowDesktop aria-label="デスクトップの表示" />
    </Tray>
  </Taskbar>
);

const App = () => (
  <Page>
    <GlobalStyle />
    <MenuBar>
      <MenuItems>
        <PsBadge>Ps</PsBadge>
        {menuItems.map(m => <button key={m} type="button">{m}</button>)}
      </MenuItems>
      <WindowButtons>
        <button type="button" aria-label="最小化">
          <Icon w={20} h={20} color="#757575"><path d="M0 15H20" strokeWidth="6" /></Icon>
        </button>
        <button type="button" aria-label="元に戻す">
          <Icon w={24} h={22} color="#757575" sw={3}><path d="M10 7V2H23V15H16M2 8H15V20H2z" /></Icon>
        </button>
        <button type="button" aria-label="閉じる">
          <Icon w={20} h={18} color="#757575" sw={3.5}><path d="M2 1 18 17M18 1 2 17" /></Icon>
        </button>
      </WindowButtons>
    </MenuBar>
    <Options />
    <Main>
      <Tools />
      <Document />
      <Panels />
    </Main>
    <TaskbarRow />
  </Page>
);

export default App;
